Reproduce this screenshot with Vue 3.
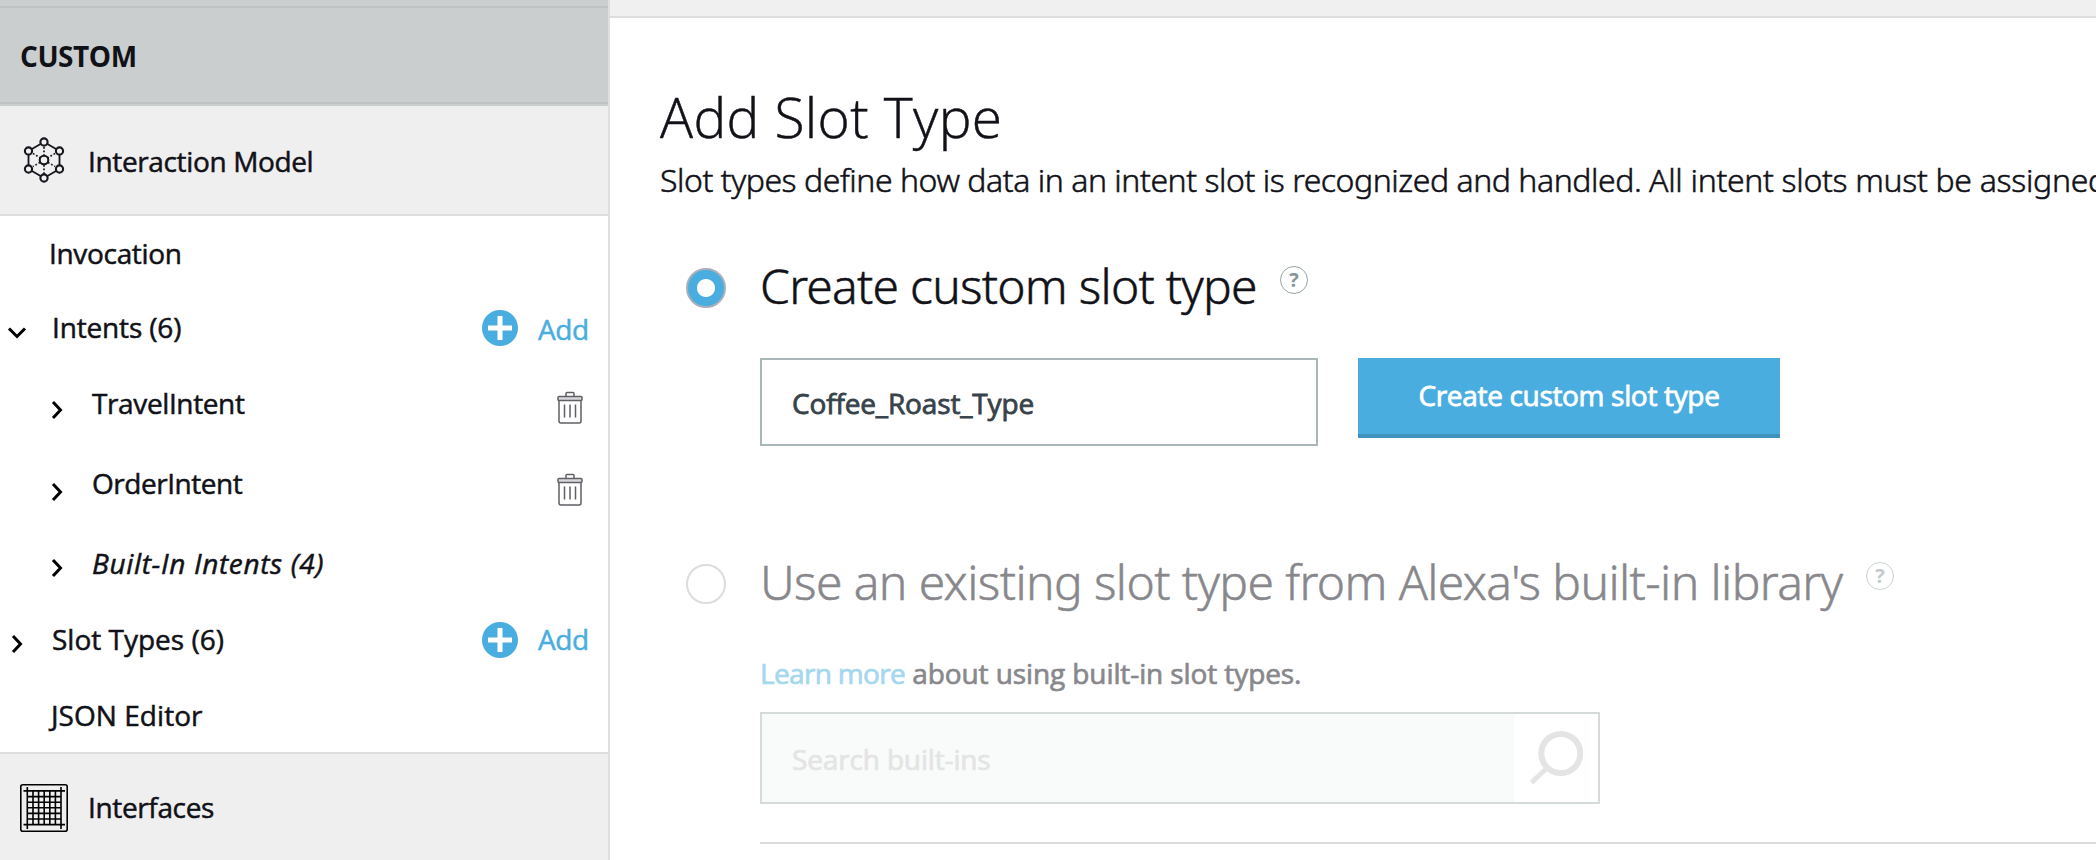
<script setup>
const tree = [
  { label: 'Invocation', cls: 'invocation' },
  { label: 'Intents (6)', cls: 'intents', chevron: 'down', add: true },
  { label: 'TravelIntent', cls: 'travel nested', chevron: 'right', trash: true },
  { label: 'OrderIntent', cls: 'order nested', chevron: 'right', trash: true },
  { label: 'Built-In Intents (4)', cls: 'builtin nested', chevron: 'right' },
  { label: 'Slot Types (6)', cls: 'slots', chevron: 'right', add: true },
  { label: 'JSON Editor', cls: 'json' }
]
const gridLines = [27.3, 33, 38.6, 44.2, 49.8, 55.4, 61]
</script>

<template>
  <div class="page">
    <aside class="sidebar">
      <div class="strip"></div>
      <div class="custom">CUSTOM</div>
      <div class="section model">
        <svg class="section-icon" width="48" height="48" viewBox="20 136 48 48" fill="none" stroke="#16161d">
          <path stroke-width="1.8" d="M44 142 59.5 151V169L44 178 28.5 169V151Z" />
          <path stroke-width="1.7" stroke-dasharray="1.7 1.9" d="M44 147V156M44 165V174M33 153.500 40 157.700M48 162.500 55 166.500M55 153.500 48 157.700M40 162.500 33 166.500" />
          <g fill="#f0f0f0" stroke-width="2.1">
            <circle cx="44" cy="142" r="3.6" /><circle cx="59.5" cy="151" r="3.6" /><circle cx="59.5" cy="169" r="3.6" />
            <circle cx="44" cy="178" r="3.6" /><circle cx="28.5" cy="169" r="3.6" /><circle cx="28.5" cy="151" r="3.6" />
            <circle cx="44" cy="160" r="4.3" />
          </g>
        </svg>
        <span>Interaction Model</span>
      </div>
      <nav class="tree">
        <div v-for="row in tree" :key="row.label" class="row" :class="row.cls">
          <svg v-if="row.chevron === 'down'" class="chevron" width="24" height="24" viewBox="0 0 24 24"><path d="M4 8.500 12 16.500 20 8.500" /></svg>
          <svg v-else-if="row.chevron" class="chevron" width="24" height="24" viewBox="0 0 24 24"><path d="M8 4 15.500 12 8 20" /></svg>
          <span class="label">{{ row.label }}</span>
          <template v-if="row.add">
            <svg class="plus" width="36" height="36" viewBox="0 0 36 36"><circle cx="18" cy="18" r="18" fill="#4aade0" /><path d="M18 6V30M6 18H30" stroke="#fff" stroke-width="5" /></svg>
            <a class="add">Add</a>
          </template>
          <svg v-if="row.trash" class="trash" width="26" height="34" viewBox="0 0 26 34" fill="none" stroke="#5f5f66" stroke-width="1.5">
            <path d="M9 5V2.500Q9 1.500 10 1.500H16Q17 1.500 17 2.500V5" />
            <rect x="1" y="5.500" width="24" height="4" rx="1" fill="#d8d8dc" />
            <path d="M2 9.500V30Q2 32 4 32H22Q24 32 24 30V9.500M7.500 13.500V26.500M13 13.500V26.500M18.500 13.500V26.500" />
          </svg>
        </div>
      </nav>
      <div class="section interfaces">
        <svg class="section-icon" width="50" height="50" viewBox="19 783 50 50" fill="none" stroke="#000">
          <rect x="20.8" y="784.8" width="46.4" height="46.4" rx="2" stroke-width="1.6" />
          <path v-for="(p, i) in gridLines" :key="p" stroke-width="1.6" :d="i % 6 ? `M${p} 791V825M27.300 ${p + 763.6}H61` : `M${p} 787V829M23.500 ${p + 763.6}H65`" />
        </svg>
        <span>Interfaces</span>
      </div>
    </aside>

    <main class="main">
      <div class="topbar"></div>
      <div class="content">
        <h1>Add Slot Type</h1>
        <p class="intro">Slot types define how data in an intent slot is recognized and handled. <span class="rest">All intent slots must be assigned</span></p>

        <section class="option first">
          <div class="option-head">
            <span class="radio on"></span>
            <span class="option-label">Create custom slot type</span>
            <span class="help">?</span>
          </div>
          <div class="option-body form">
            <div class="field">Coffee_Roast_Type</div>
            <button class="create">Create custom slot type</button>
          </div>
        </section>

        <section class="option second">
          <div class="option-head">
            <span class="radio"></span>
            <span class="option-label">Use an existing slot type from Alexa's built-in library</span>
            <span class="help">?</span>
          </div>
          <div class="option-body">
            <p class="learn"><a>Learn more</a> <span>about using built-in slot types.</span></p>
            <div class="search">
              <div class="search-field">Search built-ins</div>
              <svg width="84" height="88" viewBox="1514 714 84 88" fill="none" stroke="#e4e4e4" stroke-width="6"><circle cx="1560.8" cy="753.5" r="19.5" /><path stroke-width="5" d="M1547 768 1531.500 782.500" /></svg>
            </div>
            <hr>
          </div>
        </section>
      </div>
    </main>
  </div>
</template>

<style>
body { margin: 0; background: #fff; }
</style>

<style scoped>
.page { display: flex; width: 2096px; height: 860px; overflow: hidden; font: 400 28px/40px "Open Sans", "Noto Sans", sans-serif; color: #111118; -webkit-text-stroke: 0.5px; }
.page * { box-sizing: border-box; }
.sidebar { flex: none; width: 610px; border-right: 2px solid #dfdfdf; }
.strip { height: 8px; background: #cacece; border-bottom: 2px solid #c0c2c2; }
.custom { height: 98px; padding: 28px 0 0 20px; background: #cacece; font-weight: 700; letter-spacing: -0.45px; -webkit-text-stroke: 0; box-shadow: inset 0 -2px #cacece, inset 0 -4px #c0c2c2; }
.section { display: flex; align-items: center; background: #efefef; }
.model { height: 110px; padding: 2px 0 0 20px; border-bottom: 2px solid #dedede; letter-spacing: -0.36px; }
.model .section-icon { margin: -2px 20px 0 0; }
.interfaces { height: 108px; padding-left: 19px; border-top: 2px solid #dedede; letter-spacing: -0.36px; }
.interfaces .section-icon { margin: 2px 19px 0 0; }
.row { display: flex; align-items: center; height: 74px; padding-left: 5px; padding-right: 20px; }
.label { flex: 1; white-space: nowrap; }
.chevron { flex: none; fill: none; stroke: #000; stroke-width: 3; margin: 10px 23px 0 0; }
.intents .label { letter-spacing: -0.15px; }
.nested { padding-left: 45px; height: 78px; }
.travel .label { letter-spacing: -0.38px; }
.travel .chevron { margin-top: 14px; }
.order { height: 82px; }
.order .label { letter-spacing: -0.46px; }
.order .chevron { margin-top: 18px; }
.builtin { font-style: italic; letter-spacing: 0.65px; }
.invocation { padding-left: 49px; letter-spacing: -0.32px; }
.json { height: 76px; padding: 2px 0 0 51px; letter-spacing: 0.05px; }
.plus { margin-top: 2px; }
.add { width: 50px; margin: 4px 0 0 20px; color: #4aade0; letter-spacing: -0.45px; }
.slots .add { margin-top: 0; }
.trash { margin: 10px 5px 0 0; }
.order .trash { margin-top: 14px; }

.main { flex: 1; min-width: 0; }
.topbar { height: 18px; background: #f0f0f0; border-bottom: 2px solid #dedede; }
.content { padding: 62px 0 0 50px; }
h1, p { margin: 0; font-weight: 300; white-space: nowrap; }
h1 { font-size: 55px; line-height: 74px; letter-spacing: 0.4px; }
.intro { font-family: "Noto Sans", sans-serif; font-size: 32px; line-height: 51px; letter-spacing: -0.46px; overflow: hidden; }
.rest { letter-spacing: -0.32px; }
.option-head { display: flex; height: 60px; padding-left: 26px; }
.option-label { padding-top: 1px; font: 300 48px/60px "Noto Sans", sans-serif; white-space: nowrap; }
.first { margin-top: 50px; }
.second { margin-top: 105px; }
.radio { flex: none; width: 40px; height: 40px; margin: 13px 34px 0 0; border: 2px solid #a9b0ba; border-radius: 50%; }
.radio.on { background: radial-gradient(circle, #fff 8.5px, #4aade0 9.5px); }
.second .radio { border-color: #dcdce1; }
.first .option-label { width: 520px; letter-spacing: -0.76px; }
.second .option-label { width: 1106px; color: #88888c; letter-spacing: -0.61px; }
.help { width: 28px; height: 28px; margin-top: 11px; border: 1.5px solid #95a5a6; border-radius: 50%; color: #87959a; font-size: 20px; font-weight: 700; line-height: 25px; text-align: center; -webkit-text-stroke: 0; }
.second .help { border-color: #cad2d2; color: #c3cacc; }
.option-body { padding-left: 100px; }
.form { display: flex; align-items: flex-start; gap: 40px; padding-top: 43px; }
.field { width: 558px; height: 88px; padding: 23px 30px; border: 2px solid #aab7b8; color: #37424a; letter-spacing: -0.15px; -webkit-text-stroke: 0.8px; }
.create { width: 422px; height: 80px; padding: 0 0 2px; border: 0; border-bottom: 4px solid #4192bd; background: #4aade0; color: #fff; font: inherit; letter-spacing: -0.33px; -webkit-text-stroke: 0.8px; }
.learn { margin-top: 42px; font-weight: 400; color: #88888c; letter-spacing: -0.1px; -webkit-text-stroke: 0.7px; }
.learn a { color: #a5d7ef; letter-spacing: -0.66px; }
.search { display: flex; width: 840px; height: 92px; margin-top: 19px; border: 2px solid #d5dbdb; }
.search-field { width: 752px; padding: 25px 30px; background: #f9fbfb; color: #e4e4e4; letter-spacing: -0.15px; -webkit-text-stroke: 0.7px; }
hr { height: 2px; margin: 38px 0 0; border: 0; background: #d9dade; }
</style>
